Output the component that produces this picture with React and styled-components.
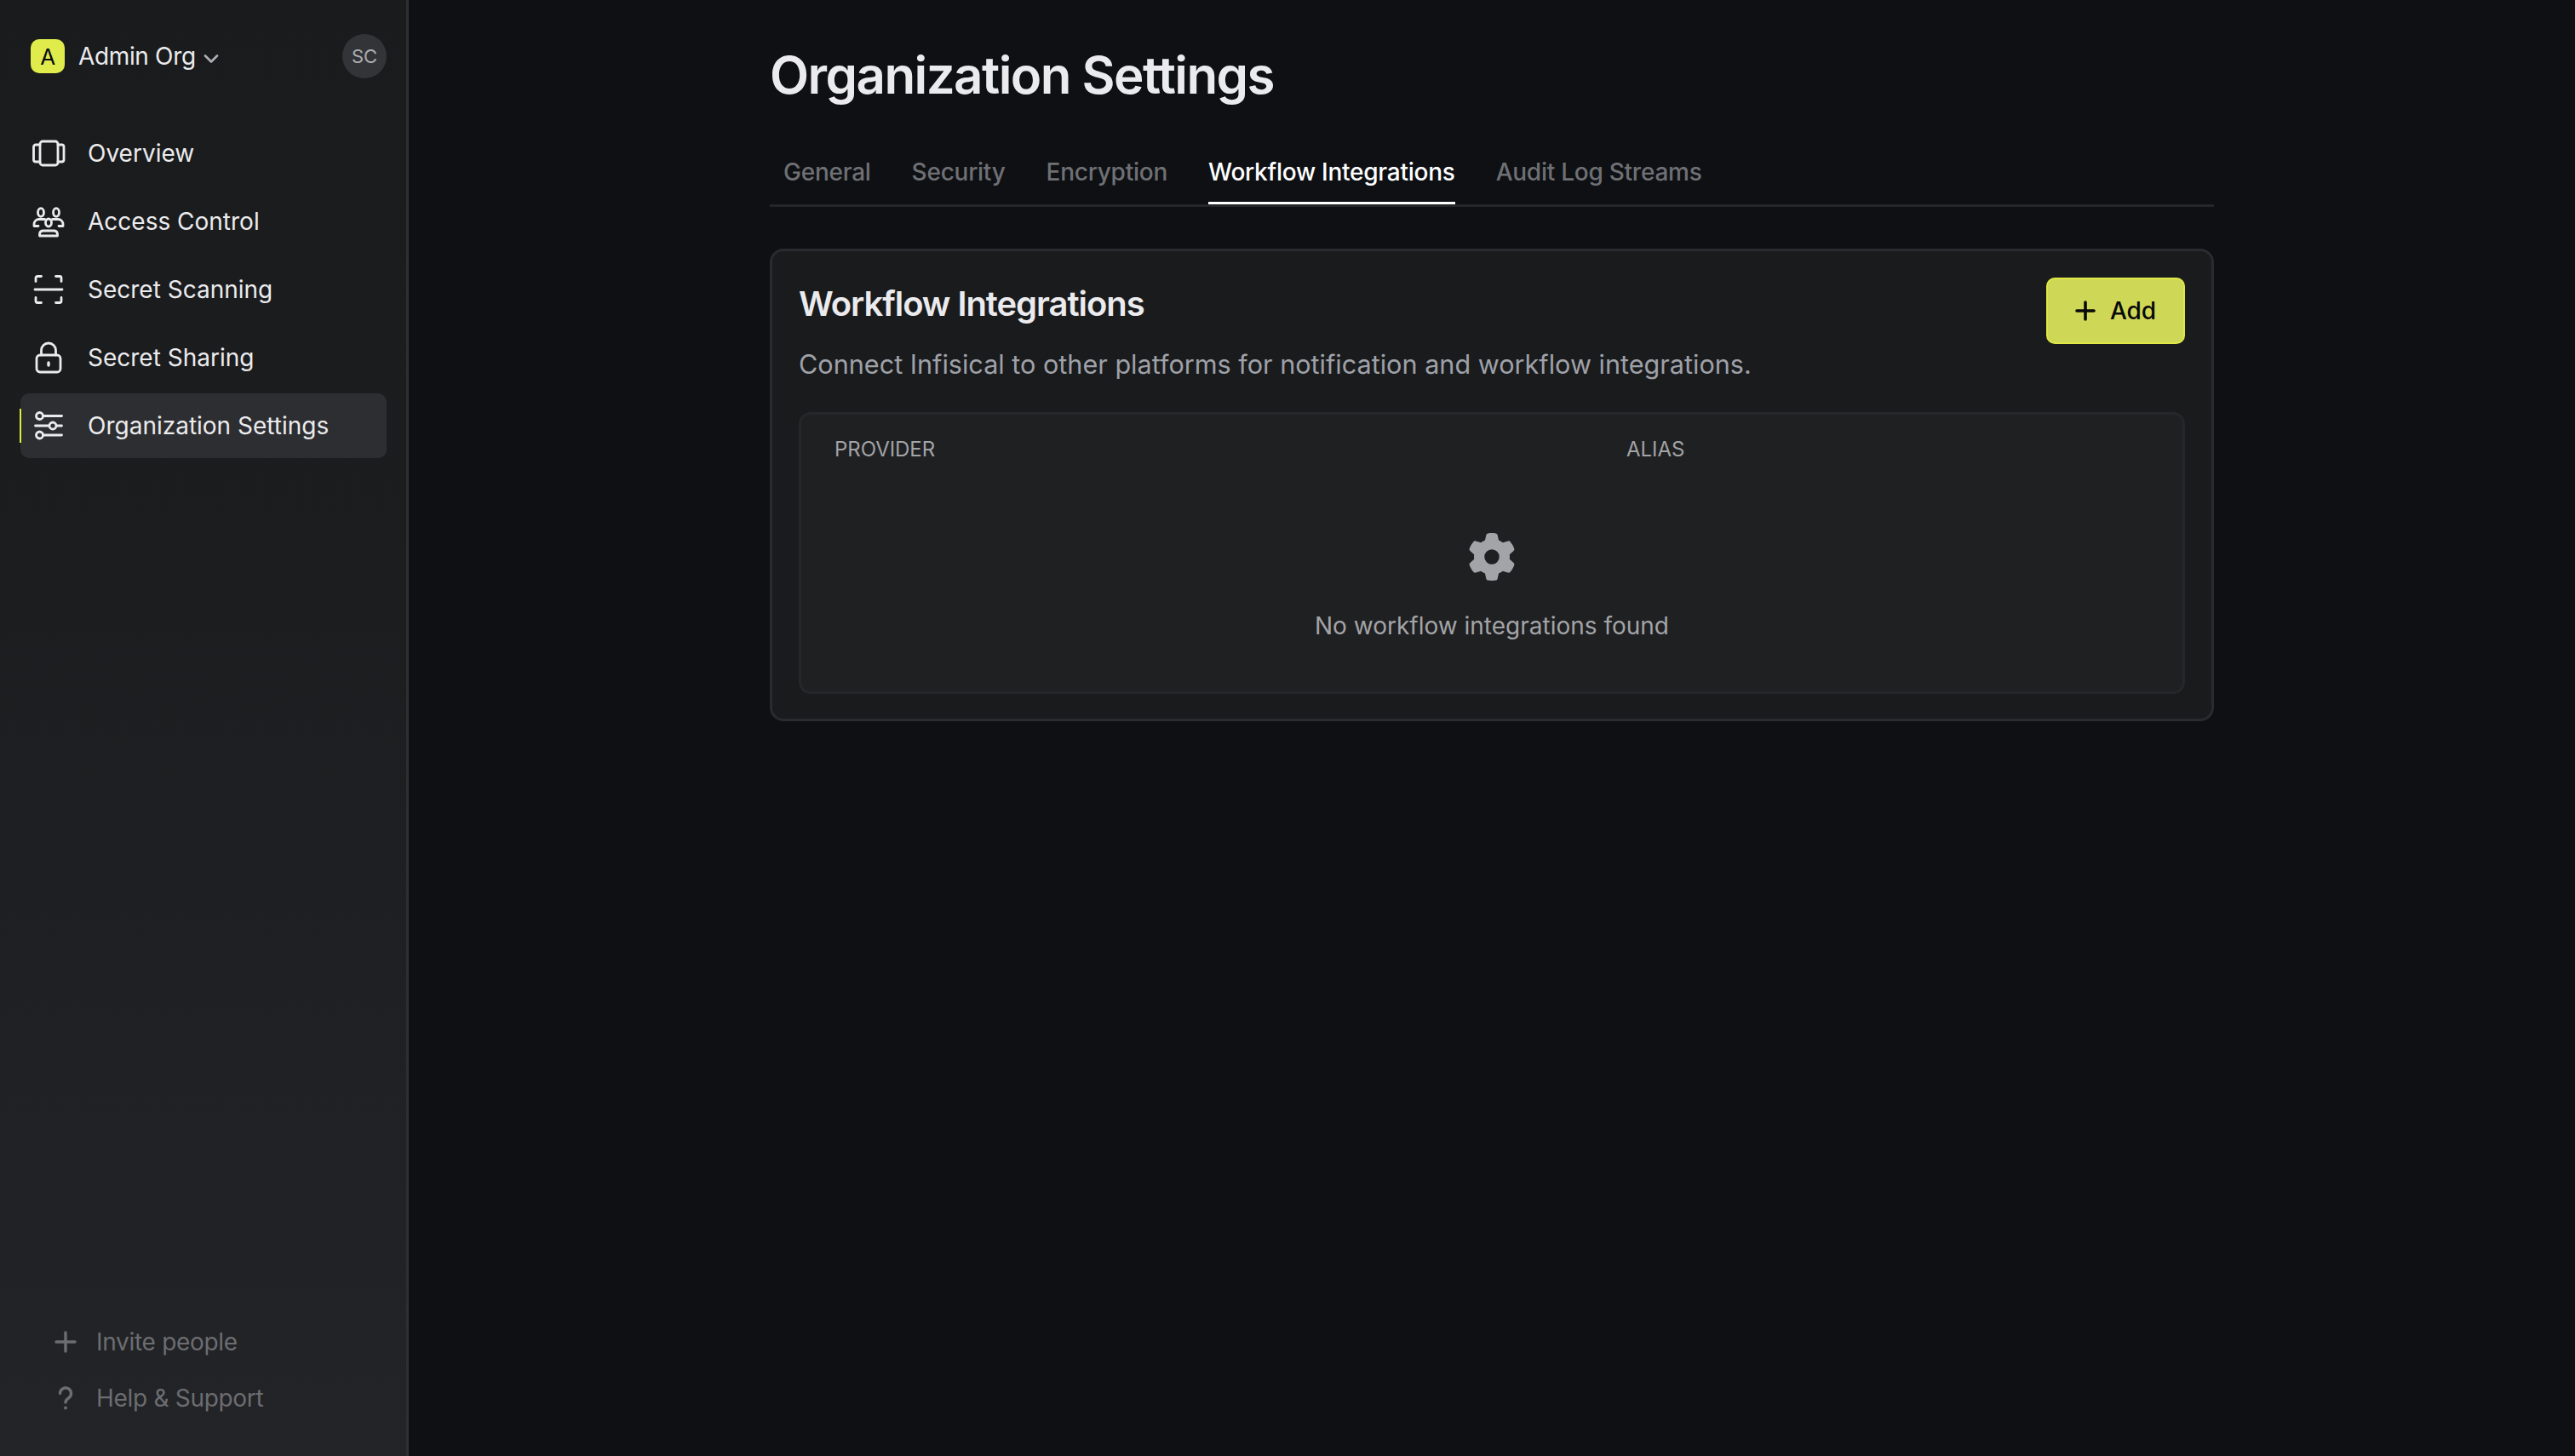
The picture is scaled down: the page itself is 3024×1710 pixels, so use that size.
import React from 'react';
import styled, { createGlobalStyle } from 'styled-components';
import { FaGear } from 'react-icons/fa6';

const GlobalStyle = createGlobalStyle`
  html, body {
    margin: 0;
    padding: 0;
    background: #0e1014;
    font-family: Inter, "Liberation Sans", sans-serif;
  }
  * {
    box-sizing: border-box;
  }
`;

const Shell = styled.div`
  display: flex;
  width: 100%;
  height: 100vh;
  overflow: hidden;
  background: #0e1014;
`;

const Sidebar = styled.aside`
  display: flex;
  flex-direction: column;
  flex: 0 0 480px;
  border-right: 3px solid #2e2f32;
  background: linear-gradient(180deg, #1a1b1d 0%, #1c1d1f 40%, #232427 100%);
`;

const OrgHeader = styled.div`
  display: flex;
  align-items: center;
  justify-content: space-between;
  height: 52px;
  margin-top: 40px;
  padding: 0 23px 0 36px;
`;

const OrgName = styled.div`
  display: flex;
  align-items: center;
  gap: 16px;
  font-size: 28px;
  letter-spacing: -0.35px;
  color: #ebebed;
`;

const OrgBadge = styled.div`
  display: flex;
  align-items: center;
  justify-content: center;
  width: 40px;
  height: 40px;
  border-radius: 10px;
  background: #e0ec4c;
  color: #0b0c0e;
  font-size: 26px;
`;

const Chevron = styled.svg`
  width: 18px;
  height: 12px;
  margin: 6px 0 0 -7px;
  fill: none;
  stroke: #aeafb2;
  stroke-width: 2.6;
  stroke-linecap: round;
  stroke-linejoin: round;
`;

const Avatar = styled.div`
  display: flex;
  align-items: center;
  justify-content: center;
  width: 52px;
  height: 52px;
  border-radius: 50%;
  background: #333437;
  color: #acadb0;
  font-size: 22px;
`;

const Nav = styled.nav`
  display: flex;
  flex-direction: column;
  gap: 4px;
  margin: 50px 23px 0 24px;
`;

const NavRow = styled.div`
  position: relative;
  display: flex;
  align-items: center;
  gap: 26px;
  height: 76px;
  padding-left: 13px;
  border-radius: 10px;
  font-size: 28px;
  color: #ebebed;
  background: ${(p) => (p.$active ? '#2d2e31' : 'transparent')};
  ${(p) =>
    p.$active &&
    `&::before {
      content: '';
      position: absolute;
      left: -1px;
      top: 18px;
      width: 2px;
      height: 40px;
      background: #e0ec3c;
    }`}
`;

const NavIcon = styled.svg`
  flex: none;
  width: 40px;
  height: 40px;
  fill: none;
  stroke: #ebebed;
  stroke-width: 2.8;
  stroke-linecap: round;
  stroke-linejoin: round;
`;

const FooterLinks = styled.div`
  display: flex;
  flex-direction: column;
  gap: 33px;
  margin-top: auto;
  padding: 0 0 52px 63px;
`;

const FooterLink = styled.div`
  display: flex;
  align-items: center;
  gap: 22px;
  height: 33px;
  font-size: 28px;
  letter-spacing: -0.3px;
  color: #6c6d71;
`;

const FooterIcon = styled.svg`
  flex: none;
  width: 28px;
  height: 28px;
  fill: none;
  stroke: #6c6d71;
  stroke-width: 3.4;
  stroke-linecap: round;
  stroke-linejoin: round;
`;

const Main = styled.main`
  flex: 1;
  display: flex;
  justify-content: center;
`;

const Content = styled.div`
  width: 1696px;
  padding-top: 52px;
`;

const PageTitle = styled.h1`
  margin: 0;
  font-size: 60px;
  line-height: 72px;
  font-weight: 600;
  letter-spacing: -1.55px;
  color: #ebebee;
`;

const Tabs = styled.div`
  display: flex;
  gap: 48px;
  height: 85px;
  margin-top: 34px;
  padding: 0 16px;
  border-bottom: 3px solid #25262a;
`;

const Tab = styled.div`
  display: flex;
  align-items: center;
  height: 82px;
  padding-top: 8px;
  font-size: 28px;
  font-weight: 500;
  letter-spacing: -0.25px;
  color: ${(p) => (p.$active ? '#ffffff' : '#6f7074')};
  border-bottom: 3px solid ${(p) => (p.$active ? '#ffffff' : 'transparent')};
`;

const Card = styled.section`
  height: 555px;
  margin-top: 49px;
  padding: 31px;
  border: 3px solid #2a2b2f;
  border-radius: 16px;
  background: #1a1b1d;
`;

const CardHead = styled.div`
  display: flex;
  align-items: flex-start;
  justify-content: space-between;
  height: 78px;
`;

const CardTitle = styled.h2`
  margin: 8px 0 0;
  font-size: 40px;
  line-height: 46px;
  font-weight: 600;
  letter-spacing: -1.05px;
  color: #ebebee;
`;

const AddButton = styled.button`
  display: flex;
  align-items: center;
  justify-content: center;
  gap: 17px;
  width: 163px;
  height: 78px;
  border: 2px solid #dfe845;
  border-radius: 10px;
  background: #cfd756;
  color: #08090a;
  font-family: inherit;
  font-size: 28px;
  font-weight: 500;
`;

const PlusIcon = styled.svg`
  width: 24px;
  height: 24px;
  fill: none;
  stroke: #08090a;
  stroke-width: 3.6;
  stroke-linecap: round;
`;

const Description = styled.p`
  margin: 0;
  font-size: 30.6px;
  line-height: 48px;
  color: #9fa1a8;
`;

const Table = styled.div`
  height: 331px;
  margin-top: 32px;
  border: 3px solid #26272a;
  border-radius: 14px;
  background: #1f2022;
`;

const HeaderRow = styled.div`
  display: grid;
  grid-template-columns: 930px 1fr;
  padding: 26px 39px 0;
  font-size: 24px;
  letter-spacing: -0.05px;
  line-height: 30px;
  color: #a2a3a6;
`;

const EmptyState = styled.div`
  display: flex;
  flex-direction: column;
  align-items: center;
  margin-top: 83px;
  color: #a3a4a7;
  font-size: 28px;
  line-height: 36px;
`;

const EmptyText = styled.div`
  margin-top: 35px;
`;

const navItems = [
  {
    label: 'Overview',
    icon: (
      <>
        <rect x="10" y="6" width="21" height="28" rx="3" />
        <path d="M10 10H5a2.500 2.500 0 0 0-2.500 2.500v15A2.500 2.500 0 0 0 5 30h5" />
        <path d="M31 10h4.500a2.500 2.500 0 0 1 2.500 2.500v15a2.500 2.500 0 0 1-2.500 2.500H31" />
      </>
    ),
  },
  {
    label: 'Access Control',
    icon: (
      <>
        <ellipse cx="11" cy="9.500" rx="3.500" ry="4.800" />
        <ellipse cx="29" cy="9.500" rx="3.500" ry="4.800" />
        <ellipse cx="20" cy="21.500" rx="3.500" ry="4.500" />
        <path d="M15.500 17.500H9c-3.500 0-6 2.500-6 6v2h5" />
        <path d="M24.500 17.500H31c3.500 0 6 2.500 6 6v2h-5" />
        <path d="M9.500 37v-1.500c0-3 2-4.500 4.500-4.500h12c2.500 0 4.500 1.500 4.500 4.500V37z" />
      </>
    ),
  },
  {
    label: 'Secret Scanning',
    icon: (
      <>
        <path d="M5 10.500V6.500A2 2 0 0 1 7 4.500h4.500" />
        <path d="M28.500 4.500H33a2 2 0 0 1 2 2v4" />
        <path d="M5 29.500v4A2 2 0 0 0 7 35.500h4.500" />
        <path d="M28.500 35.500H33a2 2 0 0 0 2-2v-4" />
        <path d="M4 20h32" />
      </>
    ),
  },
  {
    label: 'Secret Sharing',
    icon: (
      <>
        <rect x="6" y="17" width="28" height="20" rx="4" />
        <path d="M11.500 17v-5.500a8.500 8.500 0 0 1 17 0V17" />
        <path d="M20 26v3" strokeWidth="3.400" />
      </>
    ),
  },
  {
    label: 'Organization Settings',
    active: true,
    icon: (
      <>
        <circle cx="9.500" cy="8.500" r="4" />
        <path d="M14 8.500h21.500" />
        <path d="M4.500 20h16" />
        <circle cx="25" cy="20" r="4" />
        <path d="M29.500 20h6" />
        <circle cx="9.500" cy="31" r="4" />
        <path d="M14 31h21.500" />
      </>
    ),
  },
];

const tabs = ['General', 'Security', 'Encryption', 'Workflow Integrations', 'Audit Log Streams'];

const App = () => {
  return (
    <Shell>
      <GlobalStyle />
      <Sidebar>
        <OrgHeader>
          <OrgName>
            <OrgBadge>A</OrgBadge>
            Admin Org
            <Chevron viewBox="0 0 18 12">
              <path d="M2 2.500l7 7 7-7" />
            </Chevron>
          </OrgName>
          <Avatar>SC</Avatar>
        </OrgHeader>
        <Nav>
          {navItems.map((item) => (
            <NavRow key={item.label} $active={item.active}>
              <NavIcon viewBox="0 0 40 40">{item.icon}</NavIcon>
              {item.label}
            </NavRow>
          ))}
        </Nav>
        <FooterLinks>
          <FooterLink>
            <FooterIcon viewBox="0 0 28 28">
              <path d="M14 3v22M3 14h22" />
            </FooterIcon>
            Invite people
          </FooterLink>
          <FooterLink>
            <FooterIcon viewBox="0 0 28 28">
              <path d="M7.500 8.500a6.500 6.500 0 1 1 10 5.500c-2 1.300-3.500 2.400-3.500 5" />
              <path d="M14 25.500v.1" strokeWidth="3.800" />
            </FooterIcon>
            Help &amp; Support
          </FooterLink>
        </FooterLinks>
      </Sidebar>
      <Main>
        <Content>
          <PageTitle>Organization Settings</PageTitle>
          <Tabs>
            {tabs.map((tab) => (
              <Tab key={tab} $active={tab === 'Workflow Integrations'}>
                {tab}
              </Tab>
            ))}
          </Tabs>
          <Card>
            <CardHead>
              <CardTitle>Workflow Integrations</CardTitle>
              <AddButton>
                <PlusIcon viewBox="0 0 24 24">
                  <path d="M12 2v20M2 12h20" />
                </PlusIcon>
                Add
              </AddButton>
            </CardHead>
            <Description>Connect Infisical to other platforms for notification and workflow integrations.</Description>
            <Table>
              <HeaderRow>
                <div>PROVIDER</div>
                <div>ALIAS</div>
              </HeaderRow>
              <EmptyState>
                <FaGear size={56} />
                <EmptyText>No workflow integrations found</EmptyText>
              </EmptyState>
            </Table>
          </Card>
        </Content>
      </Main>
    </Shell>
  );
};

export default App;
